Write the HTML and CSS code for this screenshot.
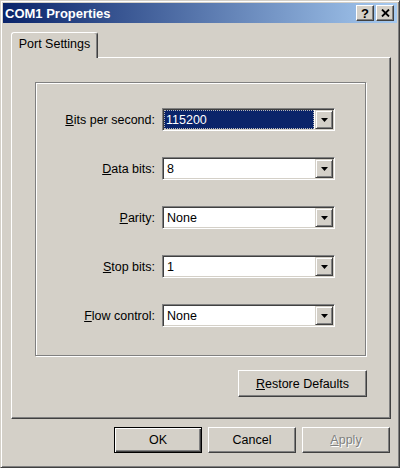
FILE: index.html
```html
<!DOCTYPE html>
<html>
<head>
<meta charset="utf-8">
<link rel="stylesheet" href="styles.css">
</head>
<body>
<div class="window">
  <div class="titlebar">
    <span class="title">COM1 Properties</span>
    <div class="cap-btn"><span class="q">?</span></div>
    <div class="cap-btn"><svg width="9" height="8" viewBox="0 0 9 8"><path d="M1 0.5 L8 7.5 M8 0.5 L1 7.5" stroke="#000" stroke-width="1.8"/></svg></div>
  </div>
  <div class="client">
    <div class="tab">Port Settings</div>
    <div class="panel">
      <div class="group">
        <div class="label"><u>B</u>its per second:</div>
        <div class="combo"><div class="value sel">115200</div><div class="dd"><svg width="7" height="4" viewBox="0 0 7 4"><polygon points="0,0 7,0 3.5,4" fill="#000"/></svg></div></div>
        <div class="label"><u>D</u>ata bits:</div>
        <div class="combo"><div class="value">8</div><div class="dd"><svg width="7" height="4" viewBox="0 0 7 4"><polygon points="0,0 7,0 3.5,4" fill="#000"/></svg></div></div>
        <div class="label"><u>P</u>arity:</div>
        <div class="combo"><div class="value">None</div><div class="dd"><svg width="7" height="4" viewBox="0 0 7 4"><polygon points="0,0 7,0 3.5,4" fill="#000"/></svg></div></div>
        <div class="label"><u>S</u>top bits:</div>
        <div class="combo"><div class="value">1</div><div class="dd"><svg width="7" height="4" viewBox="0 0 7 4"><polygon points="0,0 7,0 3.5,4" fill="#000"/></svg></div></div>
        <div class="label"><u>F</u>low control:</div>
        <div class="combo"><div class="value">None</div><div class="dd"><svg width="7" height="4" viewBox="0 0 7 4"><polygon points="0,0 7,0 3.5,4" fill="#000"/></svg></div></div>
      </div>
      <div class="restore-row">
        <div class="btn restore"><span><u>R</u>estore Defaults</span></div>
      </div>
    </div>
    <div class="buttons">
      <div class="btn default">OK</div>
      <div class="btn">Cancel</div>
      <div class="btn disabled"><span><u>A</u>pply</span></div>
    </div>
  </div>
</div>
</body>
</html>
```
FILE: styles.css
```css
* { box-sizing: border-box; }
body {
  margin: 0;
  background: #d4d0c8;
  font-family: "Liberation Sans", Arial, sans-serif;
  font-size: 12.5px;
  color: #000;
}
.window {
  width: 400px;
  height: 468px;
  border: 1px solid;
  border-color: #d4d0c8 #404040 #404040 #d4d0c8;
  box-shadow: inset 1px 1px 0 #fff, inset -1px -1px 0 #808080;
  padding: 2px;
  background: #d4d0c8;
}
.titlebar {
  height: 20px;
  background: linear-gradient(to right, #0a246a, #a6caf0);
  display: flex;
  align-items: center;
  padding: 0 3px 0 2px;
}
.title {
  flex: 1;
  color: #fff;
  font-weight: bold;
  font-size: 13px;
}
.cap-btn {
  width: 18px;
  height: 16px;
  margin-left: 2px;
  background: #d4d0c8;
  border: 1px solid;
  border-color: #fff #404040 #404040 #fff;
  box-shadow: inset -1px -1px 0 #808080;
  display: flex;
  align-items: center;
  justify-content: center;
}
.q {
  font-weight: bold;
  font-size: 13px;
  line-height: 1;
}
.client {
  padding: 9px 6px 0 8px;
}
.tab {
  width: 87px;
  height: 26px;
  margin-bottom: -1px;
  position: relative;
  z-index: 1;
  background: #d4d0c8;
  border: 1px solid;
  border-bottom: none;
  border-color: #fff #404040 transparent #fff;
  box-shadow: inset -1px 0 0 #808080;
  border-radius: 3px 3px 0 0;
  display: flex;
  align-items: center;
  justify-content: center;
  padding-bottom: 3px;
}
.panel {
  height: 362px;
  border: 1px solid;
  border-color: #fff #404040 #404040 #fff;
  box-shadow: inset -1px -1px 0 #808080;
  padding: 24px 0 0 23px;
}
.group {
  width: 331px;
  height: 274px;
  border: 1px solid #808080;
  box-shadow: 1px 1px 0 #fff, inset 1px 1px 0 #fff;
  display: grid;
  grid-template-columns: 119px 173px;
  column-gap: 7px;
  row-gap: 26px;
  padding-top: 25px;
  align-content: start;
}
.label {
  text-align: right;
  align-self: center;
}
.combo {
  height: 23px;
  border: 1px solid;
  border-color: #808080 #fff #fff #808080;
  box-shadow: inset 1px 1px 0 #404040, inset -1px -1px 0 #d4d0c8;
  background: #fff;
  display: flex;
  padding: 1px;
}
.value {
  flex: 1;
  padding-left: 3px;
  display: flex;
  align-items: center;
}
.value.sel {
  margin: 0 1px 0 0;
  background: #0a246a;
  color: #fff;
  outline: 1px dotted #b8b8b8;
  outline-offset: -1px;
  padding-left: 2px;
}
.dd {
  width: 18px;
  background: #d4d0c8;
  border: 1px solid;
  border-color: #d4d0c8 #404040 #404040 #d4d0c8;
  box-shadow: inset 1px 1px 0 #fff, inset -1px -1px 0 #808080;
  display: flex;
  align-items: center;
  justify-content: center;
}
.restore-row {
  width: 332px;
  display: flex;
  justify-content: flex-end;
  margin-top: 14px;
}
.btn {
  width: 88px;
  height: 26px;
  background: #d4d0c8;
  border: 1px solid;
  border-color: #fff #404040 #404040 #fff;
  box-shadow: inset -1px -1px 0 #808080;
  display: flex;
  align-items: center;
  justify-content: center;
}
.btn.restore {
  width: 129px;
  height: 27px;
}
.btn.default {
  border: 1px solid #000;
  box-shadow: inset 1px 1px 0 #fff, inset -1px -1px 0 #404040, inset -2px -2px 0 #808080;
}
.btn.disabled {
  color: #808080;
  text-shadow: 1px 1px 0 #fff;
}
.buttons {
  display: flex;
  justify-content: flex-end;
  gap: 6px;
  margin-top: 8px;
  padding-right: 1px;
}
```
